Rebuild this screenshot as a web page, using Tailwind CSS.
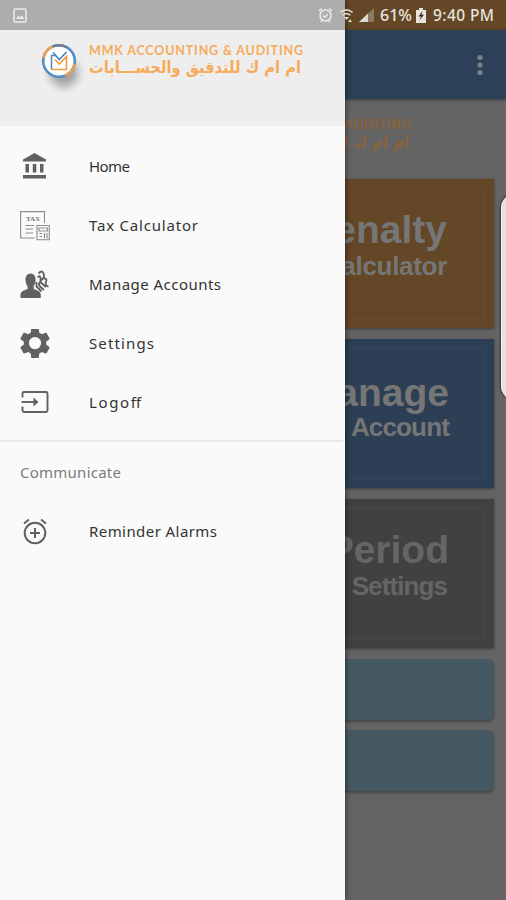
<!DOCTYPE html>
<html lang="en">
<head>
<meta charset="utf-8">
<title>MMK Accounting &amp; Auditing</title>
<script src="https://cdn.jsdelivr.net/npm/@tailwindcss/browser@4"></script>
</head>
<body class="bg-[#646464]">
<div class="relative w-[506px] h-[900px] overflow-hidden bg-[#646464] font-['Lato','Noto_Sans',sans-serif]">

  <!-- Dimmed main screen -->
  <main class="flex flex-col h-full">
    <div class="h-[30px] shrink-0 bg-[#634726]"></div>
    <header class="h-[69px] shrink-0 bg-[#2c4057] flex items-center justify-end pr-[21px] shadow-[0_1px_3px_rgba(0,0,0,0.4)]">
      <svg width="10" height="24" viewBox="0 0 10 24" fill="#7d8288"><circle cx="5" cy="4.500" r="2.600"/><circle cx="5" cy="12" r="2.600"/><circle cx="5" cy="19.500" r="2.600"/></svg>
    </header>
    <div class="h-[80px] shrink-0 pt-[17px] pr-[95px] flex flex-col items-end">
      <svg class="block overflow-visible" width="215" height="16"><text x="1" y="13" textLength="214" font-size="13" font-weight="bold" fill="#8b6339">MMK ACCOUNTING &amp; AUDITING</text></svg>
      <svg class="block overflow-visible" width="215" height="20"><text x="213" y="16" direction="rtl" textLength="212" lengthAdjust="spacingAndGlyphs" font-family="DejaVu Sans, sans-serif" font-weight="bold" font-size="17" fill="#8b6339">ام ام ك للتدقيق والحســـابات</text></svg>
    </div>
    <section class="flex flex-col gap-[11px] px-3 font-['Liberation_Sans',sans-serif] font-bold text-right text-[#767676]">
      <div class="h-[149px] bg-[#634726] p-[9px] shadow-[0_1px_3px_rgba(0,0,0,0.4)]">
        <div class="h-full border border-[#6a4d2b] pr-[37px] pt-[19px]">
          <div class="text-[39px] leading-[44px]">Penalty</div>
          <div class="text-[26px] leading-[29px] tracking-[-0.3px]">Calculator</div>
        </div>
      </div>
      <div class="h-[149px] bg-[#2c3f55] p-[9px] shadow-[0_1px_3px_rgba(0,0,0,0.4)]">
        <div class="h-full border border-[#33475c] pr-[35px] pt-[22px]">
          <div class="text-[39px] leading-[44px]">Manage</div>
          <div class="text-[26px] leading-[25px] tracking-[-0.85px]">Account</div>
        </div>
      </div>
      <div class="h-[149px] bg-[#414141] p-[9px] text-[#656565] shadow-[0_1px_3px_rgba(0,0,0,0.4)]">
        <div class="h-full border border-[#494949] pr-[35px] pt-[19px]">
          <div class="text-[39px] leading-[44px]">Period</div>
          <div class="text-[26px] leading-[29px] pr-[2px] tracking-[-0.9px]">Settings</div>
        </div>
      </div>
    </section>
    <section class="flex flex-col gap-[10px] px-3 pt-[11px]">
      <div class="h-[61px] rounded-[6px] bg-[#465861] shadow-[0_2px_3px_rgba(0,0,0,0.3)]"></div>
      <div class="h-[61px] rounded-[6px] bg-[#465861] shadow-[0_2px_3px_rgba(0,0,0,0.3)]"></div>
    </section>
  </main>

  <!-- Edge panel handle -->
  <div class="absolute left-[501px] top-[194px] w-[24px] h-[206px] rounded-l-[14px] bg-[#e2e2e2] border-l border-[#f5f5f5] shadow-[-1px_0_2px_rgba(0,0,0,0.45)]"></div>

  <!-- Navigation drawer -->
  <aside class="absolute left-0 top-0 w-[345px] h-[900px] bg-[#fafafa] shadow-[0_0_6px_rgba(0,0,0,0.6)] flex flex-col">
    <div class="h-[30px] shrink-0 bg-[#adadad]"></div>
    <div class="h-[96px] shrink-0 bg-[#eeeeee] flex pl-[41px] pt-[12px]">
      <svg class="shrink-0 overflow-visible" width="48" height="54" viewBox="0 0 48 54">
        <defs><filter id="soft" x="-50%" y="-50%" width="200%" height="200%"><feGaussianBlur stdDeviation="4"/></filter></defs>
        <ellipse cx="23" cy="31" rx="14" ry="14" fill="#000" opacity=".32" filter="url(#soft)"/>
        <circle cx="18" cy="19" r="15.800" fill="#fff" stroke="#528dc4" stroke-width="2.600"/>
        <path d="M2.600 16A15.800 15.800 0 0 1 11.500 4.600M33.400 22A15.800 15.800 0 0 1 24 33.600" fill="none" stroke="#f2a04d" stroke-width="2.600"/>
        <path d="M12 4.500A15.800 15.800 0 0 1 26 5.500" fill="none" stroke="#727e8b" stroke-width="2.600"/>
        <path d="M14.500 13.500H10.500V27.500" fill="none" stroke="#4e8ac6" stroke-width="1.500"/>
        <path d="M12 10.500L18.300 17.500L25.500 10" fill="none" stroke="#4283c4" stroke-width="1.600"/>
        <path d="M10.500 27.500H25.500V14.500L18.300 22L14 17.500" fill="none" stroke="#f19a42" stroke-width="1.600"/>
      </svg>
      <div>
        <svg class="block overflow-visible" width="215" height="15"><text x="0" y="12.500" textLength="214" font-size="12.500" font-weight="bold" fill="#f6ab5c">MMK ACCOUNTING &amp; AUDITING</text></svg>
        <svg class="block overflow-visible" width="215" height="20"><text x="212" y="15.500" direction="rtl" textLength="212" lengthAdjust="spacingAndGlyphs" font-family="DejaVu Sans, sans-serif" font-weight="bold" font-size="16.500" fill="#f6ab5c">ام ام ك للتدقيق والحســـابات</text></svg>
      </div>
    </div>

    <nav class="flex flex-col pt-[11px] font-['Noto_Sans',sans-serif]">
      <a class="h-[59px] flex items-center pl-5">
        <svg class="mr-[40px] shrink-0" width="29" height="30" viewBox="0 0 29 30" fill="#616161"><path d="M14.500 1L26 7.500V9.500H3V7.500ZM5.500 12H9V20.500H5.500ZM12.800 12H16.300V20.500H12.800ZM20 12H23.500V20.500H20ZM3 23H26V26.500H3Z"/></svg>
        <svg class="overflow-visible" width="41" height="24"><text x="0" y="17" font-size="15" textLength="41" fill="#333">Home</text></svg>
      </a>
      <a class="h-[59px] flex items-center pl-5">
        <svg class="mr-[39px] shrink-0" width="30" height="30" viewBox="0 0 30 30" fill="none" stroke="#8c8c8c" stroke-width="1.100"><path d="M14.500 27H.6V.6H24.500V12M5.500 14.500H14M5.500 18H13M5.500 22H13"/><path d="M17 14.500H29.300V28.800H17ZM19 17H27.500V20H19ZM19.500 22.500H22M19.500 25.500H22M24.500 22V27.500M27 22V27.500"/><text x="6" y="10" font-size="7" font-weight="bold" font-family="Liberation Serif" fill="#777" stroke="none" textLength="14">TAX</text></svg>
        <svg class="overflow-visible" width="109" height="24"><text x="0" y="17" font-size="15" textLength="109" fill="#333">Tax Calculator</text></svg>
      </a>
      <a class="h-[59px] flex items-center pl-5">
        <svg class="mr-[39px] shrink-0" width="30" height="30" viewBox="0 0 30 30" fill="#616161"><path d="M10.500 3.500C14.200 3.500 15.800 6.500 15.600 10C15.500 13 14.500 15 13.700 16V19C17 20.500 20.800 21 20.800 25V28H.5V25C.5 21 4.500 20.500 7.500 19V16C6.500 15 5.600 13 5.500 10C5.300 6.500 7 3.500 10.500 3.500Z"/><path d="M18.500 3.500Q22 -.5 23.500 3.500T22 9.500T22.500 14L26 17M17.500 7.500Q20 4.500 20.500 8T19.500 13T20.500 17L24 20M24 8.500Q27.500 8 26 12T28.500 16.500M16.500 12V16.500L21.500 21.500" fill="none" stroke="#616161" stroke-width="1.900"/></svg>
        <svg class="overflow-visible" width="132" height="24"><text x="0" y="17" font-size="15" textLength="132" fill="#333">Manage Accounts</text></svg>
      </a>
      <a class="h-[59px] flex items-center pl-5">
        <svg class="mr-[39px] shrink-0" width="30" height="30" viewBox="2 2.600 20 20" fill="#616161"><path d="M19.430 12.980c.04-.32.07-.64.07-.98s-.03-.66-.07-.98l2.110-1.650c.19-.15.24-.42.12-.64l-2-3.460c-.12-.22-.39-.3-.61-.22l-2.490 1c-.52-.4-1.080-.73-1.690-.98l-.38-2.650C14.460 2.180 14.250 2 14 2h-4c-.25 0-.46.18-.49.42l-.38 2.650c-.61.25-1.170.59-1.690.98l-2.490-1c-.23-.09-.49 0-.61.22l-2 3.460c-.13.22-.07.49.12.64l2.110 1.650c-.04.32-.07.65-.07.98s.03.66.07.98l-2.110 1.650c-.19.15-.24.42-.12.64l2 3.460c.12.22.39.3.61.22l2.490-1c.52.4 1.080.73 1.690.98l.38 2.650c.03.24.24.42.49.42h4c.25 0 .46-.18.49-.42l.38-2.650c.61-.25 1.170-.59 1.690-.98l2.490 1c.23.09.49 0 .61-.22l2-3.460c.12-.22.07-.49-.12-.64l-2.110-1.650zM12 16.100a4.100 4.100 0 1 1 0-8.200 4.100 4.100 0 0 1 0 8.200z"/></svg>
        <svg class="overflow-visible" width="65" height="24"><text x="0" y="17" font-size="15" textLength="65" fill="#333">Settings</text></svg>
      </a>
      <a class="h-[59px] flex items-center pl-5">
        <svg class="mr-[39px] shrink-0" width="30" height="30" viewBox="0 0 30 30" fill="none" stroke="#616161" stroke-width="1.900"><path d="M2.500 9.500V5.500Q2.500 4 4 4H26Q27.500 4 27.500 5.500V22.500Q27.500 24 26 24H4Q2.500 24 2.500 22.500V18.500"/><path d="M1.500 14H15"/><path d="M13.500 9.500L18.500 14L13.500 18.500Z" fill="#616161" stroke="none"/></svg>
        <svg class="overflow-visible" width="52" height="24"><text x="0" y="17" font-size="15" textLength="52" fill="#333">Logoff</text></svg>
      </a>
    </nav>
    <div class="mt-[8px] h-[2px] mr-[2px] bg-[#e8e8e8]"></div>
    <div class="h-[60px] flex items-center pl-5 font-['Noto_Sans',sans-serif]">
      <svg class="overflow-visible" width="101" height="24"><text x="0" y="18" font-size="15" textLength="101" fill="#7c7c7c">Communicate</text></svg>
    </div>
    <nav class="font-['Noto_Sans',sans-serif]">
      <a class="h-[59px] flex items-center pl-5">
        <svg class="mr-[39px] shrink-0" width="30" height="30" viewBox="0 0 30 30" fill="none" stroke="#616161" stroke-width="2"><circle cx="15" cy="16" r="10.300"/><path d="M15 11V21M10 16H20M4 6.500L9 2.500M26 6.500L21 2.500"/></svg>
        <svg class="overflow-visible" width="128" height="24"><text x="0" y="17" font-size="15" textLength="128" fill="#333">Reminder Alarms</text></svg>
      </a>
    </nav>
  </aside>

  <!-- System status bar -->
  <div class="absolute inset-x-0 top-0 h-[30px] flex items-center pl-[13px] pr-[12px] text-[#e9e4de]">
    <svg width="14" height="15" viewBox="0 0 14 15"><rect x="1" y="1" width="12" height="13" rx="1.200" fill="none" stroke="#ececec" stroke-width="1.600"/><path d="M3 11L5.300 7.500L7 9.500L9 7L11 11Z" fill="#ececec"/></svg>
    <div class="ml-auto flex items-center">
      <svg class="mr-[7px]" width="15" height="16" viewBox="0 0 15 16" fill="none" stroke="#ececec" stroke-width="1.500"><circle cx="7.500" cy="8.500" r="5.500"/><path d="M5 8.500L7 10.300L10 7M1 4L4 1.500M14 4L11 1.500M3 15L4 13.500M12 15L11 13.500"/></svg>
      <svg class="mr-[6px]" width="13" height="15" viewBox="0 0 13 15" fill="none" stroke="#ddd8d2" stroke-width="1.600"><path d="M.5 4.500Q6.500-.8 12.500 4.500M2.800 7.300Q6.500 4 10.200 7.300"/><path d="M4 9H9L6.500 12ZM8 14L10 11L12 14Z" fill="#ddd8d2" stroke="none"/></svg>
      <svg class="mr-[6px]" width="15" height="14" viewBox="0 0 15 14"><path d="M0 14L15 0V14Z" fill="#8c7963"/><path d="M0 14L9 5.600V14Z" fill="#ddd8d2"/></svg>
      <svg class="overflow-visible mr-[4px]" width="32" height="20"><text x="0" y="16" font-size="16" font-weight="500" textLength="32" fill="#e9e4de" font-family="Noto Sans">61%</text></svg>
      <svg class="mr-[7px]" width="10" height="15" viewBox="0 0 10 15"><path d="M3 0H7V2H10V15H0V2H3Z" fill="#e9e4de"/><path d="M6.500 3L2.500 8.500H5L3.500 12.500L8 6.800H5.500Z" fill="#3b2b19"/></svg>
      <svg class="overflow-visible" width="61" height="20"><text x="0" y="16" font-size="15.500" font-weight="500" textLength="61" fill="#e9e4de" font-family="Noto Sans">9:40 PM</text></svg>
    </div>
  </div>
</div>
</body>
</html>
